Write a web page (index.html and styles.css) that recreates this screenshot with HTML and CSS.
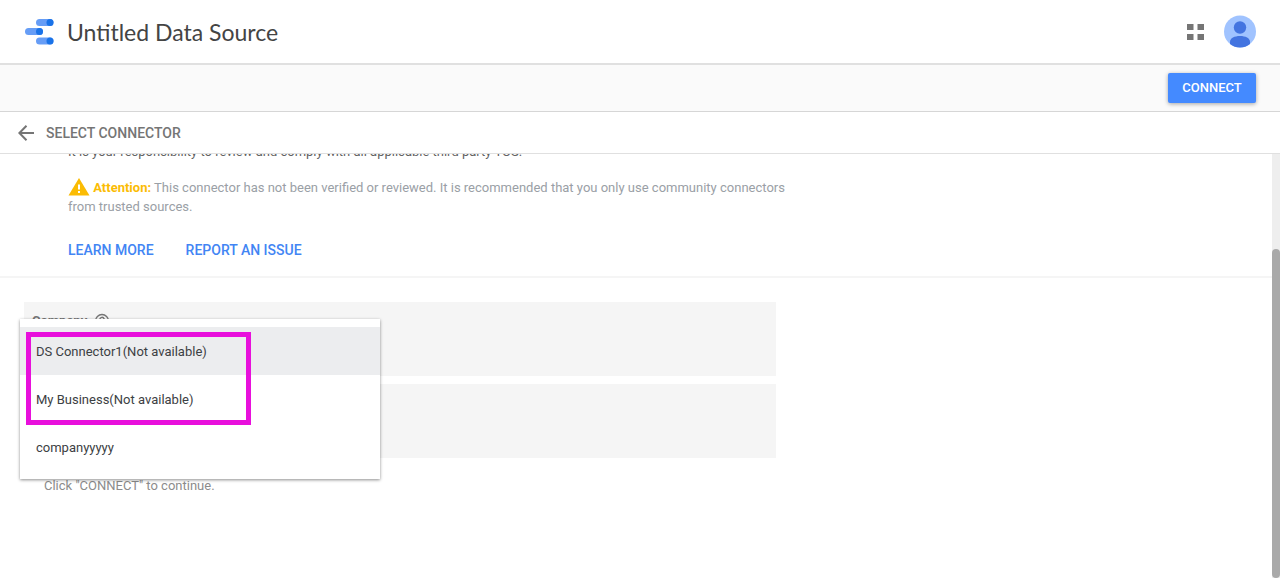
FILE: index.html
```html
<!DOCTYPE html>
<html lang="en">
<head>
    <meta charset="UTF-8">
    <meta name="viewport" content="width=device-width, initial-scale=1.0">
    <title>Untitled Data Source</title>
    <link rel="stylesheet" href="styles.css">
</head>
<body>
    <header class="header">
        <svg class="logo" viewBox="0 0 30 28" aria-hidden="true">
            <g fill="#669df6">
                <rect x="11" y="1" width="17.500" height="7" rx="3.5"/>
                <rect x="0" y="10" width="18" height="7" rx="3.5"/>
                <rect x="11" y="19.500" width="17.500" height="7" rx="3.5"/>
            </g>
            <g fill="#1a73e8">
                <circle cx="25" cy="4.5" r="3.5"/>
                <circle cx="14.5" cy="13.5" r="3.5"/>
                <circle cx="25" cy="23" r="3.5"/>
            </g>
        </svg>
        <h1 class="title">Untitled Data Source</h1>
        <button class="icon-button apps" aria-label="Apps">
            <svg width="18" height="18" viewBox="0 0 18 18" fill="#757575">
                <path d="M0 1h6.500v6H0zM10.500 1h6.500v6h-6.500zM0 11h6.500v6H0zM10.500 11h6.500v6h-6.500z"/>
            </svg>
        </button>
        <button class="icon-button" aria-label="Account">
            <svg width="32" height="34" viewBox="0 0 32 34">
                <circle cx="16" cy="16.500" r="16" fill="#a0c3ff"/>
                <circle cx="16" cy="12.500" r="6.2" fill="#4374e0"/>
                <path d="M6 29v-2c0-4 4.500-6 10-6s10 2 10 6v2a16 16 0 0 1-20 0z" fill="#4374e0"/>
            </svg>
        </button>
    </header>

    <div class="toolbar">
        <button class="connect">CONNECT</button>
    </div>

    <nav class="back-bar">
        <button class="icon-button" aria-label="Back">
            <svg width="16" height="16" viewBox="0 0 16 16" fill="none" stroke="#757575" stroke-width="2">
                <path d="M16 8H1.500M8.500 .8L1.400 8l7.100 7.200"/>
            </svg>
        </button>
        <span class="back-label">SELECT CONNECTOR</span>
    </nav>

    <div class="scroll-area">
        <main class="content">
            <section class="about">
                <p class="terms">It is your responsibility to review and comply with all applicable third party TOS.</p>
                <p class="notice">
                    <svg class="warning" viewBox="0 0 22 19" aria-hidden="true">
                        <path d="M11 0l10.500 17.500H.5z" fill="#fbbc04"/>
                        <path d="M10 6.500h2v5h-2zM10 13h2v2h-2z" fill="#fff"/>
                    </svg>
                    <strong>Attention:</strong> This connector has not been verified or reviewed. It is recommended that you only use community connectors from trusted sources.
                </p>
                <div class="links">
                    <a href="#">LEARN MORE</a>
                    <a href="#">REPORT AN ISSUE</a>
                </div>
            </section>

            <section class="params">
                <div class="card">
                    <span class="card-label">Company</span>
                    <svg width="16" height="16" viewBox="0 0 16 16" fill="none" stroke="#757575" stroke-width="1.400" aria-hidden="true">
                        <circle cx="8" cy="8" r="6.500"/>
                        <path d="M5.800 6.500a2.200 2.200 0 1 1 3.300 1.900c-.8.500-1.100.8-1.100 1.600M8 11v1.500"/>
                    </svg>
                    <div class="menu" role="listbox" aria-label="Company">
                        <button class="option selected" role="option" aria-selected="true">DS Connector1(Not available)</button>
                        <button class="option" role="option" aria-selected="false">My Business(Not available)</button>
                        <button class="option" role="option" aria-selected="false">companyyyyy</button>
                        <div class="highlight"></div>
                    </div>
                </div>
                <div class="card"></div>
                <p class="hint">Click "CONNECT" to continue.</p>
            </section>
        </main>
        <div class="scrollbar"><div class="thumb"></div></div>
    </div>
</body>
</html>
```
FILE: styles.css
```css
* {
    box-sizing: border-box;
}

body {
    margin: 0;
    height: 100vh;
    display: flex;
    flex-direction: column;
    overflow: hidden;
    background: #fff;
    color: #757575;
    font-family: Roboto, sans-serif;
    font-size: 13px;
}

button {
    font-family: inherit;
    border: none;
    cursor: pointer;
}

p {
    margin: 0;
}

/* Top bars */
.header {
    display: flex;
    align-items: center;
    height: 65px;
    padding: 0 24px 0 25px;
    border-bottom: 2px solid #e0e0e0;
    flex-shrink: 0;
}

.logo {
    width: 30px;
    height: 28px;
}

.title {
    margin: 0 auto 0 12px;
    font-family: Lato, sans-serif;
    font-size: 23px;
    font-weight: 400;
    color: #444;
}

.icon-button {
    display: flex;
    padding: 0;
    background: none;
}

.apps {
    margin-right: 19px;
}

.toolbar {
    display: flex;
    justify-content: flex-end;
    align-items: center;
    height: 47px;
    padding: 0 24px;
    background: #fafafa;
    border-bottom: 1px solid #d6d6d6;
    flex-shrink: 0;
}

.connect {
    width: 88px;
    height: 30px;
    padding: 0 0 2px;
    border-radius: 2px;
    background: #448aff;
    color: #fff;
    font-size: 13px;
    font-weight: 500;
    box-shadow: 0 1px 4px rgba(0, 0, 0, 0.35);
}

.back-bar {
    display: flex;
    align-items: center;
    gap: 12px;
    height: 42px;
    padding: 0 18px;
    border-bottom: 1px solid #e0e0e0;
    flex-shrink: 0;
}

.back-label {
    font-size: 14px;
    font-weight: 500;
}

/* Scrolled content */
.scroll-area {
    display: flex;
    flex: 1;
    min-height: 0;
    overflow: hidden;
}

.content {
    flex: 1;
}

.about {
    margin-top: -12px;
    padding: 0 68px 16px;
    border-bottom: 2px solid #f5f5f5;
    line-height: 19px;
}

.terms {
    color: #616161;
}

.notice {
    max-width: 724px;
    margin-top: 17px;
    color: #9aa0a6;
}

.notice strong {
    color: #fbbc04;
}

.warning {
    width: 22px;
    height: 19px;
    vertical-align: bottom;
}

.links {
    display: flex;
    gap: 32px;
    margin-top: 25px;
}

.links a {
    color: #4285f4;
    font-size: 14px;
    font-weight: 500;
    text-decoration: none;
}

.params {
    display: flex;
    flex-direction: column;
    gap: 8px;
    padding: 24px;
}

.card {
    position: relative;
    display: flex;
    align-items: flex-start;
    gap: 7px;
    max-width: 752px;
    height: 74px;
    padding: 11px 8px;
    background: #f5f5f5;
}

.card-label {
    font-weight: 700;
}

.hint {
    padding: 12px 20px;
    color: #8c8c8c;
}

/* Open drop-down */
.menu {
    position: absolute;
    top: 17px;
    left: -4px;
    z-index: 1;
    width: 360px;
    padding: 8px 0;
    background: #fff;
    box-shadow: 0 1px 3px rgba(0, 0, 0, 0.45);
}

.option {
    display: block;
    width: 100%;
    height: 48px;
    padding: 0 16px;
    background: none;
    color: #3c4043;
    font-size: 13px;
    text-align: left;
}

.option.selected {
    background: #ecedef;
}

.highlight {
    position: absolute;
    top: 13px;
    left: 6px;
    width: 225px;
    height: 93px;
    border: 5px solid #e80fdc;
    pointer-events: none;
}

.scrollbar {
    display: flex;
    align-items: flex-end;
    width: 8px;
    background: #eee;
}

.thumb {
    width: 100%;
    height: 77.5%;
    border-radius: 4px;
    background: #a9a9a9;
}
```
